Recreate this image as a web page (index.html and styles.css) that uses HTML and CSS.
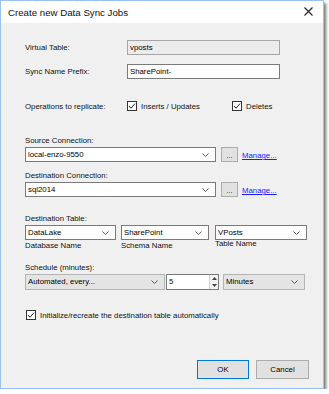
FILE: index.html
```html
<!DOCTYPE html>
<html lang="en">
<head>
  <meta charset="UTF-8">
  <link rel="stylesheet" href="styles.css">
</head>
<body>
  <div class="dialog">
    <div class="titlebar">
      <span>Create new Data Sync Jobs</span>
      <svg class="close" width="9" height="9" viewBox="0 0 9 9"><path d="M0.5 0.5L8.5 8.5M8.5 0.5L0.5 8.5" stroke="#222" stroke-width="1.1"/></svg>
    </div>

    <div class="content">
      <div class="row row-virtual">
        <span class="label">Virtual Table:</span>
        <div class="field disabled">vposts</div>
      </div>

      <div class="row row-prefix">
        <span class="label">Sync Name Prefix:</span>
        <div class="field">SharePoint-</div>
      </div>

      <div class="row row-ops">
        <span class="label">Operations to replicate:</span>
        <label class="check check-inserts">
          <svg class="box" width="10" height="10" viewBox="0 0 10 10"><rect x="0.5" y="0.5" width="9" height="9" fill="#fff" stroke="#333"/><path d="M2 5L4 7.2L8 2.6" fill="none" stroke="#222"/></svg>
          Inserts / Updates
        </label>
        <label class="check">
          <svg class="box" width="10" height="10" viewBox="0 0 10 10"><rect x="0.5" y="0.5" width="9" height="9" fill="#fff" stroke="#333"/><path d="M2 5L4 7.2L8 2.6" fill="none" stroke="#222"/></svg>
          Deletes
        </label>
      </div>

      <div class="group group-source">
        <div class="caption">Source Connection:</div>
        <div class="conn">
          <div class="combo combo-conn">local-enzo-9550<svg class="chev" width="7" height="4" viewBox="0 0 7 4"><path d="M0.5 0.5L3.5 3.5L6.5 0.5" fill="none" stroke="#555"/></svg></div>
          <div class="dots">...</div>
          <a class="manage">Manage...</a>
        </div>
      </div>

      <div class="group group-dest">
        <div class="caption">Destination Connection:</div>
        <div class="conn">
          <div class="combo combo-conn">sql2014<svg class="chev" width="7" height="4" viewBox="0 0 7 4"><path d="M0.5 0.5L3.5 3.5L6.5 0.5" fill="none" stroke="#555"/></svg></div>
          <div class="dots">...</div>
          <a class="manage">Manage...</a>
        </div>
      </div>

      <div class="group group-table">
        <div class="caption">Destination Table:</div>
        <div class="tables">
          <div class="table-col col-db">
            <div class="combo">DataLake<svg class="chev" width="7" height="4" viewBox="0 0 7 4"><path d="M0.5 0.5L3.5 3.5L6.5 0.5" fill="none" stroke="#555"/></svg></div>
            <div class="hint">Database Name</div>
          </div>
          <div class="table-col col-schema">
            <div class="combo">SharePoint<svg class="chev" width="7" height="4" viewBox="0 0 7 4"><path d="M0.5 0.5L3.5 3.5L6.5 0.5" fill="none" stroke="#555"/></svg></div>
            <div class="hint">Schema Name</div>
          </div>
          <div class="table-col col-name">
            <div class="combo">VPosts<svg class="chev" width="7" height="4" viewBox="0 0 7 4"><path d="M0.5 0.5L3.5 3.5L6.5 0.5" fill="none" stroke="#555"/></svg></div>
            <div class="hint hint-up">Table Name</div>
          </div>
        </div>
      </div>

      <div class="group group-schedule">
        <div class="caption">Schedule (minutes):</div>
        <div class="schedule">
          <div class="combo list list-mode">Automated, every...<svg class="chev" width="7" height="4" viewBox="0 0 7 4"><path d="M0.5 0.5L3.5 3.5L6.5 0.5" fill="none" stroke="#555"/></svg></div>
          <div class="spin">
            <span>5</span>
            <div class="arrows">
              <svg width="5" height="3" viewBox="0 0 5 3"><path d="M0 3L2.5 0L5 3Z" fill="#444"/></svg>
              <svg width="5" height="3" viewBox="0 0 5 3"><path d="M0 0L2.5 3L5 0Z" fill="#444"/></svg>
            </div>
          </div>
          <div class="combo list list-unit">Minutes<svg class="chev" width="7" height="4" viewBox="0 0 7 4"><path d="M0.5 0.5L3.5 3.5L6.5 0.5" fill="none" stroke="#555"/></svg></div>
        </div>
      </div>

      <label class="check check-init">
        <svg class="box" width="10" height="10" viewBox="0 0 10 10"><rect x="0.5" y="0.5" width="9" height="9" fill="#fff" stroke="#333"/><path d="M2 5L4 7.2L8 2.6" fill="none" stroke="#222"/></svg>
        Initialize/recreate the destination table automatically
      </label>

      <div class="actions">
        <button class="btn btn-ok">OK</button>
        <button class="btn">Cancel</button>
      </div>
    </div>
  </div>
</body>
</html>
```

FILE: styles.css
```css
body {
  margin: 0;
  background: #ffffff;
  font-family: 'Liberation Sans', Arial, sans-serif;
  font-size: 7.8px;
  color: #111;
}

.dialog {
  width: 322px;
  height: 387px;
  border: 1px solid #9cc3ec;
  background: #f0f0f0;
  display: flex;
  flex-direction: column;
  box-shadow: 2px 3px 3px rgba(0, 0, 0, 0.55);
}

.titlebar {
  height: 22px;
  background: #ffffff;
  display: flex;
  align-items: center;
  justify-content: space-between;
  padding: 0 10px 0 7px;
  font-size: 9.7px;
  color: #111;
}

.close {
  margin-top: -1px;
}

.content {
  flex: 1;
  display: flex;
  flex-direction: column;
  padding: 0 14px 9px 24px;
}

.row {
  display: flex;
  align-items: center;
}

.row .label {
  width: 102px;
}

.row-virtual {
  margin-top: 17px;
}

.row-prefix {
  margin-top: 9px;
}

.field {
  width: 149px;
  height: 13px;
  line-height: 13px;
  padding-left: 2px;
  border: 1px solid #7a7a7a;
  background: #ffffff;
  color: #000;
}

.field.disabled {
  background: #ececec;
  border-color: #a6a6a6;
}

.row-ops {
  margin-top: 21px;
  height: 12px;
}

.check {
  display: flex;
  align-items: center;
  gap: 4px;
}

.check-inserts {
  width: 105px;
}

.box {
  flex: none;
}

.group {
  display: flex;
  flex-direction: column;
}

.caption {
  height: 12px;
  line-height: 12px;
}

.group-source {
  margin-top: 23px;
}

.group-dest {
  margin-top: 8px;
}

.group-table {
  margin-top: 16px;
}

.group-schedule {
  margin-top: 10px;
}

.conn {
  display: flex;
  align-items: center;
}

.combo {
  position: relative;
  height: 13px;
  line-height: 13px;
  padding-left: 2px;
  border: 1px solid #7a7a7a;
  background: #ffffff;
  color: #000;
}

.chev {
  position: absolute;
  right: 6px;
  top: 5px;
}

.combo-conn {
  width: 187px;
}

.dots {
  width: 15px;
  height: 13px;
  margin-left: 5px;
  border: 1px solid #adadad;
  background: #e1e1e1;
  text-align: center;
  line-height: 15px;
  font-size: 7px;
}

.manage {
  margin-left: 4px;
  margin-top: 2px;
  color: #1a1aff;
  text-decoration: underline;
}

.tables {
  display: flex;
}

.col-db .combo {
  width: 87px;
}

.col-schema {
  margin-left: 5px;
}

.col-schema .combo {
  width: 84px;
}

.col-name {
  margin-left: 6px;
}

.col-name .combo {
  width: 88px;
}

.hint {
  height: 12px;
  line-height: 12px;
}

.hint-up {
  margin-top: -2px;
}

.schedule {
  display: flex;
  align-items: center;
}

.list {
  height: 14px;
  line-height: 14px;
  background: #e4e4e4;
  border-color: #b5b5b5;
}

.list-mode {
  width: 136px;
}

.spin {
  display: flex;
  justify-content: space-between;
  width: 49px;
  height: 14px;
  line-height: 14px;
  margin-left: 1px;
  padding-left: 2px;
  border: 1px solid #7a7a7a;
  background: #ffffff;
}

.arrows {
  width: 8px;
  display: flex;
  flex-direction: column;
  align-items: center;
  justify-content: space-around;
  border-left: 1px solid #d0d0d0;
  background: #f2f2f2;
}

.list-unit {
  width: 78px;
  margin-left: 4px;
}

.check-init {
  margin-top: 19px;
  margin-left: 1px;
  height: 12px;
}

.actions {
  margin-top: auto;
  display: flex;
  justify-content: flex-end;
  gap: 7px;
}

.btn {
  height: 19px;
  padding: 0;
  border: 1px solid #adadad;
  background: #e1e1e1;
  font-family: inherit;
  font-size: 7.8px;
  color: #000;
  width: 53px;
}

.btn-ok {
  width: 52px;
  border-color: #0078d7;
}
```
